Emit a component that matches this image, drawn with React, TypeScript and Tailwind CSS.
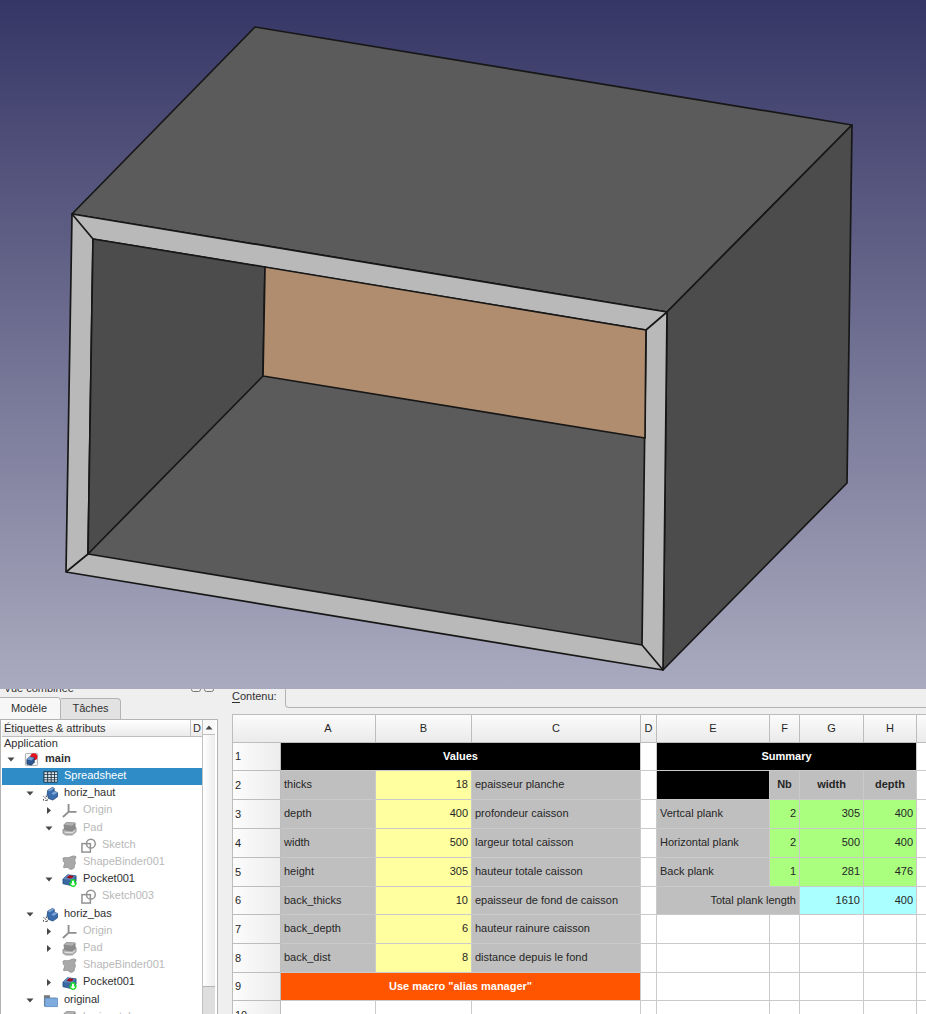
import type { ReactNode } from "react";

type IconName = "document" | "sheet" | "body" | "origin" | "pad" | "sketch" | "binder" | "pocket" | "folder";

type Node = {
  label: string;
  level: 0 | 1 | 2 | 3;
  icon: IconName;
  arrow?: "open" | "closed";
  muted?: boolean;
  bold?: boolean;
  selected?: boolean;
};

const groups: Node[][] = [
  [
    { label: "main", level: 0, icon: "document", arrow: "open", bold: true },
    { label: "Spreadsheet", level: 1, icon: "sheet", selected: true },
    { label: "horiz_haut", level: 1, icon: "body", arrow: "open" },
    { label: "Origin", level: 2, icon: "origin", arrow: "closed", muted: true },
  ],
  [
    { label: "Pad", level: 2, icon: "pad", arrow: "open", muted: true },
    { label: "Sketch", level: 3, icon: "sketch", muted: true },
    { label: "ShapeBinder001", level: 2, icon: "binder", muted: true },
    { label: "Pocket001", level: 2, icon: "pocket", arrow: "open" },
    { label: "Sketch003", level: 3, icon: "sketch", muted: true },
  ],
  [
    { label: "horiz_bas", level: 1, icon: "body", arrow: "open" },
    { label: "Origin", level: 2, icon: "origin", arrow: "closed", muted: true },
    { label: "Pad", level: 2, icon: "pad", arrow: "closed", muted: true },
    { label: "ShapeBinder001", level: 2, icon: "binder", muted: true },
    { label: "Pocket001", level: 2, icon: "pocket", arrow: "closed" },
  ],
  [
    { label: "original", level: 1, icon: "folder", arrow: "open" },
    { label: "horizontal", level: 2, icon: "pad", muted: true },
  ],
];

const indent = ["pl-[3px]", "pl-[22px]", "pl-[41px]", "pl-[60px]"];

const drawings: Record<IconName, ReactNode> = {
  document: (
    <>
      <rect x="1.5" y="1.5" width="13" height="13" rx="1" fill="#f4f4f4" stroke="#aaa" />
      <circle cx="10.5" cy="5" r="3.8" fill="#e3141c" />
      <path d="M3 8l3-3 5 1v5l-3 3-5-1z" fill="#2c5590" stroke="#15305a" strokeWidth=".6" />
      <path d="M3 8l3-3 5 1-3 3z" fill="#6e9bd2" />
    </>
  ),
  sheet: (
    <>
      <rect x=".5" y="2.5" width="15" height="12" fill="#1d2d3a" />
      <path d="M1.5 3.5h3v2h-3zM5.5 3.5h2.7v2H5.5zM9.2 3.5h2.7v2H9.2zM12.8 3.5H15v2h-2.2zM1.5 6.5h3v2h-3zM5.5 6.5h2.7v2H5.5zM9.2 6.5h2.7v2H9.2zM12.8 6.5H15v2h-2.2zM1.5 9.3h3v2h-3zM5.5 9.3h2.7v2H5.5zM9.2 9.3h2.7v2H9.2zM12.8 9.3H15v2h-2.2zM1.5 12h3v1.7h-3zM5.5 12h2.7v1.7H5.5zM9.2 12h2.7v1.7H9.2zM12.8 12H15v1.7h-2.2z" fill="#d9e8f0" />
    </>
  ),
  body: (
    <>
      <path d="M5 4.500l5-3 2 1v3l3.500 1.500v4.500l-5 3.500-6.500-2.500z" fill="#3a6cae" stroke="#1f4578" strokeWidth=".8" />
      <path d="M5 4.500l5-3 2 1-4.500 3zM9 8l3-2.500L15.500 7l-4.500 2.500z" fill="#7ea6d8" />
      <path d="M0 10.500h5.500V16H0z" fill="#fff" />
      <path d="M.5 11l5 4.500M.5 15.500V13m2 2.500H5M3 11h2.500v2" fill="none" stroke="#222" strokeDasharray="1.500 1" />
    </>
  ),
  origin: (
    <path d="M7 1v8.500M7 9.500h8.500M7 9.500L1 15" fill="none" stroke="#8e8e8e" strokeWidth="2" />
  ),
  pad: (
    <>
      <path d="M1 9l4-2h10v4.500L11 15H4l-3-2z" fill="#b4b4b4" stroke="#8a8a8a" strokeWidth=".8" />
      <path d="M2 4l3-2.500 9 .5v6l-3 2.500-8-1z" fill="#8c8c8c" stroke="#808080" strokeWidth=".8" />
      <path d="M2 4l3-2.500 9 .5-3 3z" fill="#b0b0b0" />
      <path d="M3 12l8 .5 3-2.500" fill="none" stroke="#e8e8e8" />
    </>
  ),
  sketch: (
    <g fill="none" stroke="#929292" strokeWidth="1.600">
      <circle cx="10.500" cy="6" r="4.700" />
      <rect x="1" y="6" width="9" height="9" />
    </g>
  ),
  binder: (
    <path d="M1 3.500C3 1.500 5 4 8 2.500s5-2 7-.5c-1 2-2 3-1 5.500s-1 2.500-1 4.500c1.500 2-4 4.500-5.500 2.500S5 13 2.500 13.500 4 9 2.500 8 1.500 6 1 3.500z" fill="#a8a8a8" stroke="#949494" />
  ),
  pocket: (
    <>
      <path d="M1 7.500l5-4.500 9 1v6l-5 4.500-9-2z" fill="#3a68a3" stroke="#24497c" strokeWidth=".8" />
      <path d="M1 7.500l5-4.500 9 1-5 4.500z" fill="#5f89bd" />
      <path d="M5.500 6l2-2 4.500.5-2 2z" fill="#c60f18" stroke="#8b0a12" />
      <path d="M10 8.500h3.500v3h1.500c0 2-1.500 3.500-3.200 4-1.800-.5-3.300-2-3.300-4H10z" fill="#fff" stroke="#14dc25" strokeWidth="1.400" />
    </>
  ),
  folder: (
    <>
      <path d="M1 2.500h6.500v2.500h7v9H1z" fill="#777" />
      <path d="M2 5.500h13.500v9H2z" fill="#7eacdf" stroke="#5b8bc3" strokeWidth=".8" />
    </>
  ),
};

function Icon({ name }: { name: IconName }) {
  return (
    <svg viewBox="0 0 16 16" className="mr-1.5 ml-[7px] size-[15px] shrink-0" aria-hidden="true">
      {drawings[name]}
    </svg>
  );
}

function Arrow({ dir }: { dir?: "open" | "closed" }) {
  return (
    <svg viewBox="0 0 12 12" className="size-3 shrink-0" aria-hidden="true">
      {dir === "open" && <path d="M2.500 3.500h7l-3.500 4z" fill="#484848" />}
      {dir === "closed" && <path d="M4 2v7l4-3.500z" fill="#484848" />}
    </svg>
  );
}

function TreeRow({ node }: { node: Node }) {
  const tone = node.selected ? "text-white" : node.muted ? "text-[#b8b8b8]" : "text-[#303030]";
  return (
    <li
      className={`flex h-[17px] items-center ${indent[node.level]} ${tone} ${node.selected ? "bg-[#308cc6]" : ""} ${node.bold ? "font-bold" : ""}`}
    >
      <Arrow dir={node.arrow} />
      <Icon name={node.icon} />
      <span className="pb-[3px] leading-[14px]">{node.label}</span>
    </li>
  );
}

function Viewport() {
  return (
    <svg viewBox="0 0 926 689" className="block h-auto w-full shrink-0" role="img" aria-label="Caisson">
      <defs>
        <linearGradient id="sky" x1="0" y1="0" x2="0" y2="1">
          <stop offset="0" stopColor="#363666" />
          <stop offset="1" stopColor="#aaaabf" />
        </linearGradient>
      </defs>
      <rect width="926" height="689" fill="url(#sky)" />
      <g stroke="#171717" strokeWidth="1.700" strokeLinejoin="round">
        <path d="M72 214L255 27L852 125L667 312Z" fill="#5b5b5b" />
        <path d="M667 312L852 125L847 483L663 670Z" fill="#4c4c4c" />
        <path d="M72 214L667 312L663 670L66 572Z" fill="#b9b9b9" />
        <path d="M93 239L646 330L642 645L88 554Z" fill="#5b5b5b" />
        <path d="M93 239L265 267L263 376L88 554Z" fill="#4c4c4c" />
        <path d="M265 267L646 330L645 438L263 376Z" fill="#b08d6e" />
        <path d="M72 214L93 239M667 312L646 330M663 670L642 645M66 572L88 554" />
      </g>
    </svg>
  );
}

function ModelPanel() {
  return (
    <aside className="flex w-[218px] shrink-0 flex-col">
      <div className="flex h-2 shrink-0 items-end justify-between overflow-hidden pr-0.5 pl-1">
        <span className="mb-px leading-4">Vue combinée</span>
        <svg viewBox="0 0 26 12" className="mb-1 h-3 w-[26px]" aria-hidden="true">
          <g fill="none" stroke="#777">
            <rect x="1.500" y=".5" width="9" height="10" rx="2" />
            <rect x="14.500" y=".5" width="9" height="10" rx="2" />
            <path d="M4 8l4-5M17 8l4-5M17 3l4 5" />
          </g>
        </svg>
      </div>
      <div className="flex h-[22px] shrink-0 items-end" role="tablist">
        <button role="tab" aria-selected="true" className="h-[22px] w-[61px] rounded-tr-sm border-t border-r border-[#b4b4b4] bg-[#f7f7f7] pr-0.5 pb-0.5">
          Modèle
        </button>
        <button role="tab" aria-selected="false" className="h-[21px] w-[60px] rounded-tr-sm border-t border-r border-[#b4b4b4] bg-[#e2e2e2] pb-0.5">
          Tâches
        </button>
      </div>
      <div className="flex min-h-0 flex-1 border-t border-r border-l border-[#b4b4b4] bg-white pr-0.5 pl-px">
        <div className="min-w-0 flex-1 overflow-hidden">
          <div className="flex h-[17px] border-b border-[#bdbdbd] bg-linear-to-b from-white to-[#ebebeb] leading-4">
            <span className="flex-1 pl-0.5">Étiquettes &amp; attributs</span>
            <span className="w-3 border-l border-[#c4c4c4] pl-0.5">D</span>
          </div>
          <div className="h-[14px] pl-0.5 leading-3">Application</div>
          {groups.map((group, i) => (
            <ul key={i} className="pb-px">
              {group.map((node, j) => (
                <TreeRow key={j} node={node} />
              ))}
            </ul>
          ))}
        </div>
        <div className="flex w-[13px] flex-col border-l border-[#c0c0c0] bg-[#dedede]">
          <div className="flex h-[15px] items-center justify-center border-b border-[#c0c0c0] bg-[#f8f8f8]">
            <svg viewBox="0 0 8 5" className="h-[5px] w-2" aria-hidden="true">
              <path d="M.5 4.500h7L4 .5z" fill="#484848" />
            </svg>
          </div>
          <div className="h-[252px] border-b border-[#b4b4b4] bg-linear-to-r from-white to-[#ececec]" />
        </div>
      </div>
    </aside>
  );
}

const gray = "bg-[#bfbfbf]";
const yellow = "bg-[#ffff9f]";
const green = "bg-[#aaff7f]";
const cyan = "bg-[#aaffff]";

function Cell({ children, tone = "", right, center, span, last }: {
  children?: ReactNode;
  tone?: string;
  right?: boolean;
  center?: boolean;
  span?: number;
  last?: boolean;
}) {
  const align = center ? "text-center font-bold" : right ? "text-right" : "text-left";
  return (
    <td colSpan={span} className={`overflow-hidden border-b border-[#cacaca] px-[3px] pb-0.5 whitespace-nowrap ${last ? "" : "border-r"} ${align} ${tone}`}>
      {children}
    </td>
  );
}

function Row({ n, short, children }: { n: number; short?: boolean; children: ReactNode }) {
  return (
    <tr className={short ? "h-[28px]" : "h-[29px]"}>
      <th scope="row" className="border-r border-b border-l border-[#bdbdbd] bg-linear-to-r from-[#fcfcfc] to-[#ededed] pb-px pl-0.5 text-left font-normal">
        {n}
      </th>
      {children}
      <Cell last />
    </tr>
  );
}

function Blank() {
  return (
    <>
      <Cell />
      <Cell />
      <Cell />
      <Cell />
    </>
  );
}

const values: [string, number, string][] = [
  ["thicks", 18, "epaisseur planche"],
  ["depth", 400, "profondeur caisson"],
  ["width", 500, "largeur total caisson"],
  ["height", 305, "hauteur totale caisson"],
  ["back_thicks", 10, "epaisseur de fond de caisson"],
  ["back_depth", 6, "hauteur rainure caisson"],
  ["back_dist", 8, "distance depuis le fond"],
];

const planks: [string, number, number, number][] = [
  ["Vertcal plank", 2, 305, 400],
  ["Horizontal plank", 2, 500, 400],
  ["Back plank", 1, 281, 476],
];

function summaryCells(i: number) {
  if (i === 0) {
    return (
      <>
        <Cell tone="bg-black" />
        <Cell tone={gray} center>Nb</Cell>
        <Cell tone={gray} center>width</Cell>
        <Cell tone={gray} center>depth</Cell>
      </>
    );
  }
  if (i <= planks.length) {
    const [name, nb, width, depth] = planks[i - 1];
    return (
      <>
        <Cell tone={gray}>{name}</Cell>
        <Cell tone={green} right>{nb}</Cell>
        <Cell tone={green} right>{width}</Cell>
        <Cell tone={green} right>{depth}</Cell>
      </>
    );
  }
  if (i === 4) {
    return (
      <>
        <Cell tone={gray} right span={2}>Total plank length</Cell>
        <Cell tone={cyan} right>1610</Cell>
        <Cell tone={cyan} right>400</Cell>
      </>
    );
  }
  return <Blank />;
}

function Sheet() {
  return (
    <main className="flex min-w-0 flex-1 flex-col pl-[14px]">
      <div className="flex h-[19px] shrink-0 items-stretch">
        <label htmlFor="content" className="w-[53px] leading-[14px]">
          <span className="underline underline-offset-2">C</span>ontenu:
        </label>
        <input id="content" className="min-w-0 flex-1 rounded-bl-sm border-b border-l border-[#b4b4b4] bg-[#efefef] px-1 outline-none" />
      </div>
      <div className="mt-1.5 min-h-0 flex-1 overflow-hidden bg-white">
        <table className="w-full table-fixed border-separate border-spacing-0 text-[#262626]">
          <colgroup>
            <col className="w-[49px]" />
            <col className="w-[95px]" />
            <col className="w-[96px]" />
            <col className="w-[169px]" />
            <col className="w-[16px]" />
            <col className="w-[113px]" />
            <col className="w-[30px]" />
            <col className="w-[64px]" />
            <col className="w-[53px]" />
            <col />
          </colgroup>
          <thead>
            <tr className="h-[29px] bg-linear-to-b from-[#fcfcfc] to-[#eaeaea]">
              <th className="border-t border-b border-l border-[#bdbdbd]" />
              {["A", "B", "C", "D", "E", "F", "G", "H"].map((c) => (
                <th key={c} scope="col" className="border-t border-r border-b border-[#bdbdbd] p-0 pb-0.5 text-center font-normal">
                  {c}
                </th>
              ))}
              <th className="border-t border-b border-[#bdbdbd]" />
            </tr>
          </thead>
          <tbody>
            <Row n={1} short>
              <Cell tone="bg-black text-white" center span={3}>Values</Cell>
              <Cell />
              <Cell tone="bg-black text-white" center span={4}>Summary</Cell>
            </Row>
            {values.map(([name, value, note], i) => (
              <Row key={name} n={i + 2} short={i === 4}>
                <Cell tone={gray}>{name}</Cell>
                <Cell tone={yellow} right>{value}</Cell>
                <Cell tone={gray}>{note}</Cell>
                <Cell />
                {summaryCells(i)}
              </Row>
            ))}
            <Row n={9} short>
              <Cell tone="bg-[#ff5500] text-white" center span={3}>Use macro "alias manager"</Cell>
              <Cell />
              <Blank />
            </Row>
            <Row n={10}>
              <Cell />
              <Cell />
              <Cell />
              <Cell />
              <Blank />
            </Row>
          </tbody>
        </table>
      </div>
    </main>
  );
}

export default function App() {
  return (
    <div className="flex h-screen flex-col overflow-hidden bg-[#efefef] font-['Liberation_Sans',Arial,sans-serif] text-[#303030]">
      <Viewport />
      <div className="flex min-h-0 flex-1 overflow-hidden text-[11px] leading-4">
        <ModelPanel />
        <Sheet />
      </div>
    </div>
  );
}
